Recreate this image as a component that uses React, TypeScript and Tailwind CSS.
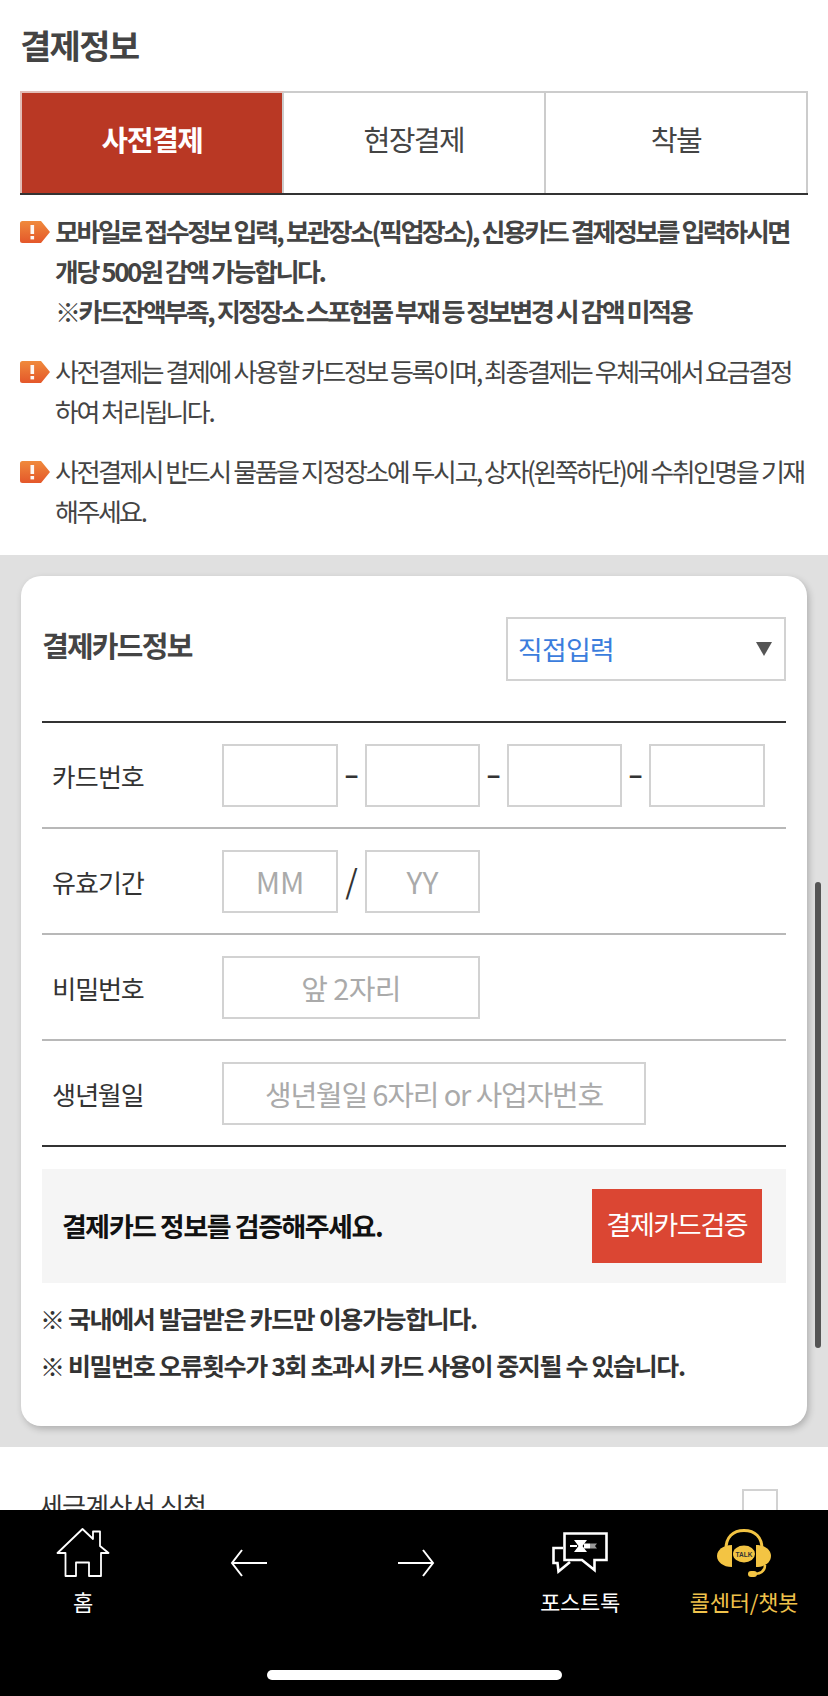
const FONT = "font-['Noto_Sans_KR','Noto_Sans_CJK_KR',sans-serif]"

function NoteIcon() {
  return (
    <svg width="30" height="22" viewBox="0 0 30 22" className="mt-[10px] shrink-0">
      <defs>
        <linearGradient id="noteTag" x1="0" y1="0" x2="0" y2="1">
          <stop offset="0" stopColor="#f08a3c" />
          <stop offset="1" stopColor="#e4572a" />
        </linearGradient>
      </defs>
      <path d="M2.5 0H21L30 11L21 22H2.5A2.5 2.5 0 0 1 0 19.5V2.5A2.5 2.5 0 0 1 2.5 0Z" fill="url(#noteTag)" />
      <rect x="10.5" y="4" width="3.6" height="9" fill="#fff" opacity="0.95" />
      <rect x="10.5" y="15" width="3.6" height="3.4" fill="#fff" opacity="0.95" />
    </svg>
  )
}

function Note({ children, bold }: { children: React.ReactNode; bold?: boolean }) {
  return (
    <div className="flex gap-[5px]">
      <NoteIcon />
      <p
        className={`text-[26px] leading-[40px] tracking-[-0.095em] whitespace-nowrap text-[#444] ${bold ? 'font-bold' : ''}`}
      >
        {children}
      </p>
    </div>
  )
}

function Field({ placeholder, className }: { placeholder?: string; className: string }) {
  return (
    <input
      placeholder={placeholder}
      className={`h-[63px] border-2 border-[#d2d2d2] bg-white text-center outline-none placeholder:text-[#aaa] ${className}`}
    />
  )
}

function Row({ label, children, last }: { label: string; children: React.ReactNode; last?: boolean }) {
  return (
    <div
      className={`flex h-[106px] items-center border-b-2 pl-[10px] ${last ? 'border-[#333]' : 'border-[#b8b8b8]'}`}
    >
      <span className="w-[170px] shrink-0 text-[26px] tracking-[-0.04em] text-[#333]">{label}</span>
      {children}
    </div>
  )
}

function Dash() {
  return <span className="mb-[6px] flex w-[27px] justify-center text-[26px] font-bold text-[#333]">–</span>
}

function HomeIcon() {
  return (
    <svg width="54" height="50" viewBox="0 0 54 50" fill="none" stroke="#fff" strokeWidth="1.8" strokeLinejoin="round">
      <path d="M1.5 25L26.5 1L37 11V3.5H44V18L52.5 25H45V48H33V34.5H20V48H9.5V25Z" />
    </svg>
  )
}

function ArrowIcon({ flip }: { flip?: boolean }) {
  return (
    <svg width="38" height="28" viewBox="0 0 38 28" fill="none" stroke="#fff" strokeWidth="2" className={flip ? '-scale-x-100' : ''}>
      <path d="M37 14H2M12 1L2 14L12 27" />
    </svg>
  )
}

function TalkIcon() {
  return (
    <svg width="56" height="42" viewBox="0 0 56 42">
      <path d="M11 16H1.5V31H5.5L6.5 39.5L18 30" fill="none" stroke="#fff" strokeWidth="2.6" />
      <path d="M12.5 1.5H54.5V28H42.5V38L30 28H12.5Z" fill="#000" stroke="#fff" strokeWidth="2.6" />
      <path d="M22 8H35L30.5 14L35 20H22L26.5 14Z" fill="#fff" />
      <path d="M18 13H25V15H18ZM32 11.5H38V16.5H32Z" fill="#fff" />
      <path d="M38 11.5H45L43 14L45 16.5H38Z" fill="#fff" opacity="0.6" />
    </svg>
  )
}

function HeadsetIcon() {
  return (
    <svg width="54" height="48" viewBox="0 0 54 48">
      <path d="M9 20C9 8 16 1.5 27 1.5C38 1.5 45 8 45 20" fill="none" stroke="#f3c443" strokeWidth="3" />
      <path d="M15 16C6 16 0 21 0 27C0 33 6 38 15 38Z" fill="#f3c443" />
      <path d="M39 16C48 16 54 21 54 27C54 33 48 38 39 38Z" fill="#f3c443" />
      <ellipse cx="27" cy="25" rx="11" ry="8.5" fill="#f3c443" />
      <path d="M48 36C48 42 44 45 36 45" fill="none" stroke="#f3c443" strokeWidth="2.5" />
      <rect x="31" y="42" width="9" height="6" rx="3" fill="#f3c443" />
      <text x="27" y="27.5" textAnchor="middle" fontSize="6.5" fontWeight="700" fill="#333" fontFamily="Liberation Sans, sans-serif">TALK</text>
    </svg>
  )
}

function NavItem({ icon, label, gold, className }: { icon: React.ReactNode; label?: string; gold?: boolean; className: string }) {
  return (
    <div className={`flex flex-col items-center ${className}`}>
      <div className="flex h-[50px] items-center justify-center">{icon}</div>
      {label && (
        <span className={`mt-[7px] text-[22px] leading-[32px] tracking-[-0.01em] whitespace-nowrap ${gold ? 'text-[#f0c24b]' : 'text-white'}`}>
          {label}
        </span>
      )}
    </div>
  )
}

export default function App() {
  return (
    <div className={`relative flex h-[1696px] w-[828px] flex-col overflow-hidden bg-white ${FONT}`}>
      <div className="flex-1 overflow-hidden">
        <div className="h-[555px] bg-white px-5">
          <h2 className="pt-[22px] text-[34px] leading-[46px] font-bold tracking-[-0.05em] text-[#444]">결제정보</h2>

          <div className="mt-[23px] grid h-[104px] grid-cols-[264px_262px_262px] border-b-2 border-[#333] text-[29px] tracking-[-0.05em]">
            <div className="flex items-center justify-center border-t-2 border-r-2 border-l-2 border-t-[#e2bdb6] border-r-[#ccc] border-l-[#e2bdb6] bg-[#b93824] pb-[9px] font-bold text-white">사전결제</div>
            <div className="flex items-center justify-center border-t-2 border-r-2 border-[#ccc] pb-[9px] text-[#444]">현장결제</div>
            <div className="flex items-center justify-center border-t-2 border-r-2 border-[#ccc] pb-[9px] text-[#444]">착불</div>
          </div>

          <div className="mt-[16px] flex flex-col gap-[20px]">
            <Note bold>
              모바일로 접수정보 입력, 보관장소(픽업장소), 신용카드 결제정보를 입력하시면
              <br />
              개당 500원 감액 가능합니다.
              <br />
              ※카드잔액부족, 지정장소 스포현품 부재 등 정보변경 시 감액 미적용
            </Note>
            <Note>
              사전결제는 결제에 사용할 카드정보 등록이며, 최종결제는 우체국에서 요금결정
              <br />
              하여 처리됩니다.
            </Note>
            <Note>
              사전결제시 반드시 물품을 지정장소에 두시고, 상자(왼쪽하단)에 수취인명을 기재
              <br />
              해주세요.
            </Note>
          </div>
        </div>

        <div className="h-[892px] bg-[#e0e0e0] px-[21px] pt-[21px]">
          <div className="h-[850px] rounded-[20px] bg-white px-[21px] shadow-[2px_3px_7px_rgba(0,0,0,0.22)]">
            <div className="flex h-[147px] items-start justify-between border-b-2 border-[#333] pt-[41px]">
              <h3 className="mt-[7px] text-[29px] leading-[40px] font-bold tracking-[-0.06em] text-[#444]">결제카드정보</h3>
              <div className="flex h-[64px] w-[280px] items-center justify-between border-2 border-[#d2d2d2] pr-[12px] pl-[10px]">
                <span className="text-[27px] tracking-[-0.03em] text-[#3b7ddd]">직접입력</span>
                <span className="h-0 w-0 border-x-[8px] border-t-[14px] border-x-transparent border-t-[#555]" />
              </div>
            </div>

            <Row label="카드번호">
              <Field className="w-[116px]" />
              <Dash />
              <Field className="w-[115px]" />
              <Dash />
              <Field className="w-[115px]" />
              <Dash />
              <Field className="w-[116px]" />
            </Row>
            <Row label="유효기간">
              <Field placeholder="MM" className="w-[116px] text-[30px]" />
              <span className="mb-[4px] flex w-[27px] justify-center text-[32px] text-[#333]">/</span>
              <Field placeholder="YY" className="w-[115px] text-[30px]" />
            </Row>
            <Row label="비밀번호">
              <Field placeholder="앞 2자리" className="w-[258px] text-[29px] tracking-[-0.02em]" />
            </Row>
            <Row label="생년월일" last>
              <Field placeholder="생년월일 6자리 or 사업자번호" className="w-[424px] text-[29px] tracking-[-0.04em]" />
            </Row>

            <div className="mt-[22px] flex h-[114px] items-center justify-between bg-[#f5f5f5] pr-[24px] pl-[20px]">
              <p className="text-[27px] font-bold tracking-[-0.055em] text-[#111]">결제카드 정보를 검증해주세요.</p>
              <button className="h-[74px] w-[170px] bg-[#db4633] pb-[4px] text-[27px] tracking-[-0.05em] text-white">결제카드검증</button>
            </div>

            <div className="mt-[12px] text-[25px] leading-[47px] font-bold tracking-[-0.055em] text-[#333]">
              <p className="-ml-[2px]">※ 국내에서 발급받은 카드만 이용가능합니다.</p>
              <p className="-ml-[2px]">※ 비밀번호 오류횟수가 3회 초과시 카드 사용이 중지될 수 있습니다.</p>
            </div>
          </div>
        </div>

        <div className="flex items-start justify-between bg-white pt-[42px] pr-[50px] pl-[39px]">
          <span className="-mt-[3px] text-[26px] leading-[38px] tracking-[-0.03em] text-[#333]">세금계산서 신청</span>
          <span className="h-[36px] w-[36px] border-2 border-[#d2d2d2]" />
        </div>
      </div>

      <nav className="relative h-[186px] shrink-0 bg-black">
        <div className="grid grid-cols-[166px_166px_168px_160px_168px] pt-[18px]">
          <NavItem icon={<HomeIcon />} label="홈" className="" />
          <NavItem icon={<ArrowIcon />} className="pt-[10px]" />
          <NavItem icon={<ArrowIcon flip />} className="pt-[10px]" />
          <NavItem icon={<TalkIcon />} label="포스트톡" className="" />
          <NavItem icon={<HeadsetIcon />} label="콜센터/챗봇" gold className="" />
        </div>
        <div className="absolute bottom-[16px] left-[267px] h-[10px] w-[295px] rounded-full bg-white" />
      </nav>

      <div className="absolute top-[882px] right-[7px] h-[466px] w-[6px] rounded-full bg-[#555]" />
    </div>
  )
}
